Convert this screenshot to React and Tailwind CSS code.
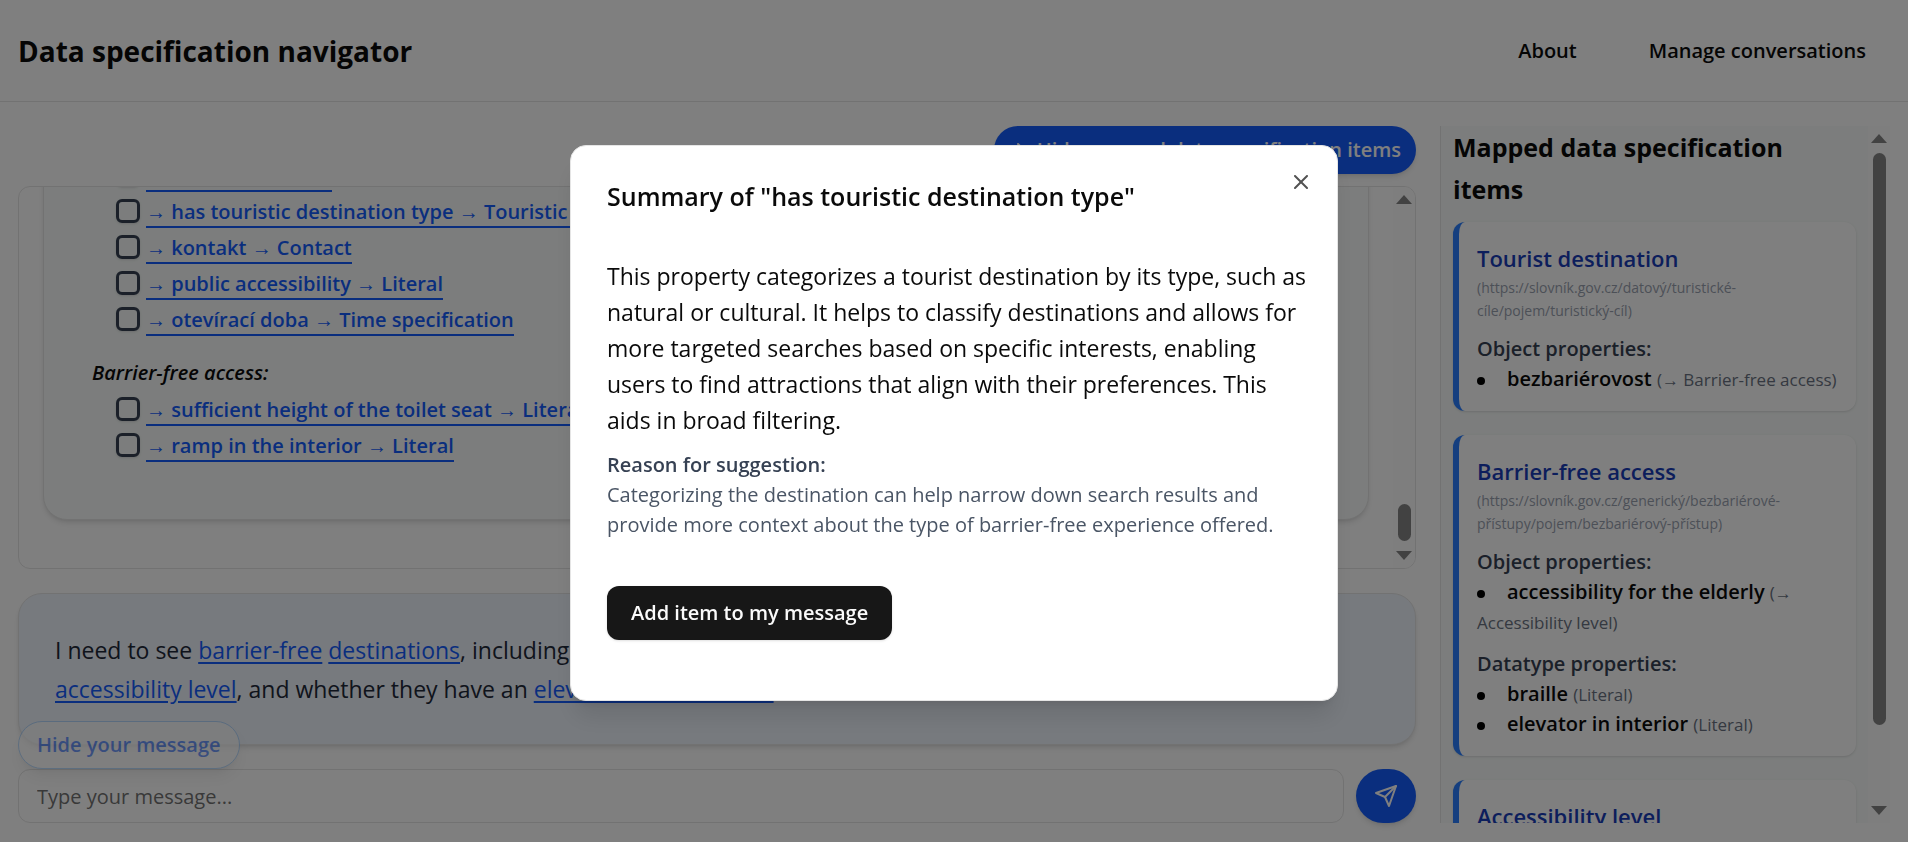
import React from "react";
import { ChevronRight, X } from "lucide-react";

const suggestions = [
  {
    title: "Tourist destination:",
    items: [
      "→ identifier → Text",
      "→ has touristic destination type → Touristic destination type",
      "→ kontakt → Contact",
      "→ public accessibility → Literal",
      "→ otevírací doba → Time specification",
    ],
  },
  {
    title: "Barrier-free access:",
    items: [
      "→ sufficient height of the toilet seat → Literal",
      "→ ramp in the interior → Literal",
    ],
  },
];

const mappedItems = [
  {
    name: "Tourist destination",
    iri: "(https://slovník.gov.cz/datový/turistické-cíle/pojem/turistický-cíl)",
    groups: [
      {
        label: "Object properties:",
        properties: [["bezbariérovost", "(→ Barrier-free access)"]],
      },
    ],
  },
  {
    name: "Barrier-free access",
    iri: "(https://slovník.gov.cz/generický/bezbariérové-přístupy/pojem/bezbariérový-přístup)",
    groups: [
      {
        label: "Object properties:",
        properties: [["accessibility for the elderly", "(→ Accessibility level)"]],
      },
      {
        label: "Datatype properties:",
        properties: [
          ["braille", "(Literal)"],
          ["elevator in interior", "(Literal)"],
        ],
      },
    ],
  },
  { name: "Accessibility level", iri: "", groups: [] },
];

function Arrow({ down }) {
  return (
    <svg viewBox="0 0 16 9" className="h-[9px] w-4 shrink-0 fill-[#858585]" aria-hidden="true">
      <path d={down ? "M0 0H16L8 9Z" : "M0 9H16L8 0Z"} />
    </svg>
  );
}

function ScrollTrack({ children }) {
  return (
    <div className="flex w-[22px] shrink-0 flex-col items-center bg-[#fdfdfd] py-2" aria-hidden="true">
      <Arrow />
      <div className="flex w-full flex-1 flex-col items-center py-[10px]">{children}</div>
      <Arrow down />
    </div>
  );
}

function Header() {
  return (
    <header className="flex h-[102px] shrink-0 items-center justify-between border-b border-neutral-200 px-[18px]">
      <h1 className="text-[28px] font-bold">Data specification navigator</h1>
      <nav className="flex gap-6 text-[20px] font-semibold">
        <a href="#about" className="px-6">About</a>
        <a href="#conversations" className="px-6">Manage conversations</a>
      </nav>
    </header>
  );
}

function Suggestions() {
  return (
    <section className="flex min-h-0 flex-1 overflow-hidden rounded-xl border border-neutral-200">
      <div className="flex min-w-0 flex-1 flex-col justify-end overflow-hidden px-6 pb-12">
        <div className="shrink-0 rounded-3xl border border-neutral-200 bg-[#f8fbfa] px-12 pt-12 pb-[54px] text-[20px] shadow-md">
          {suggestions.map((group, g) => (
            <div key={group.title}>
              <h3 className={g === 0 ? "mb-1 leading-8 font-semibold italic" : "mt-[18px] mb-1 leading-8 font-semibold italic"}>
                {group.title}
              </h3>
              <ul className="pl-6">
                {group.items.map((item) => (
                  <li key={item} className="flex h-9 items-center gap-[6px]">
                    <input
                      type="checkbox"
                      aria-label={item}
                      className="mb-1 size-6 shrink-0 appearance-none rounded-md border-3 border-gray-700 shadow-sm"
                    />
                    <a href="#item" className="border-b-2 border-blue-600 leading-7 font-semibold whitespace-nowrap text-blue-600">
                      {item}
                    </a>
                  </li>
                ))}
              </ul>
            </div>
          ))}
        </div>
      </div>
      <ScrollTrack>
        <div className="mt-auto h-[37px] w-[13px] rounded-full bg-[#858585]" />
      </ScrollTrack>
    </section>
  );
}

function Term({ children }) {
  return (
    <a href="#term" className="text-blue-600 underline decoration-2 underline-offset-3">
      {children}
    </a>
  );
}

function Message() {
  return (
    <section className="mt-6 shrink-0 rounded-3xl border border-neutral-200 bg-[#eef4fc] px-9 pt-[37px] pb-[35px] text-[23px] leading-[39px] text-gray-800 shadow-md">
      I need to see <Term>barrier-free</Term> <Term>destinations</Term>, including <Term>accessibility for the elderly</Term>,
      the presence of <Term>braille</Term>, their overall <Term>accessibility&nbsp;level</Term>, and whether they have an{" "}
      <Term>elevator in the interior</Term>.
    </section>
  );
}

function Composer() {
  return (
    <div className="relative mt-6 flex shrink-0 gap-3">
      <button
        type="button"
        className="absolute bottom-full left-0 h-12 rounded-full border border-blue-300 bg-white px-[18px] text-[20px] font-semibold text-blue-600 opacity-60 shadow-lg"
      >
        Hide your message
      </button>
      <input
        type="text"
        aria-label="Message"
        placeholder="Type your message..."
        className="h-[54px] min-w-0 flex-1 rounded-xl border border-neutral-200 px-[18px] text-[20px] placeholder:text-neutral-500"
      />
      <button
        type="button"
        aria-label="Send"
        className="flex h-[54px] w-[60px] items-center justify-center rounded-full bg-blue-600 text-white shadow-md"
      >
        <svg
          viewBox="0 0 24 24"
          className="size-6"
          fill="none"
          stroke="currentColor"
          strokeWidth="2"
          strokeLinecap="round"
          strokeLinejoin="round"
        >
          <path d="m22 2-7 20-4-9-9-4Z" />
          <path d="M22 2 11 13" />
        </svg>
      </button>
    </div>
  );
}

function Sidebar() {
  return (
    <aside className="flex w-[450px] shrink-0 overflow-hidden border-l border-neutral-200 bg-[#f8fbfa]">
      <div className="min-w-0 flex-1 px-3">
        <h2 className="mb-3 text-[25px] leading-[42px] font-bold">Mapped data specification items</h2>
        <div className="flex flex-col gap-6">
          {mappedItems.map((item) => (
            <article key={item.name} className="rounded-xl border-l-6 border-blue-500 bg-white px-[18px] pt-[18px] pb-[17px] shadow-sm">
              <h3 className="text-[22px] leading-9 font-semibold text-blue-800">{item.name}</h3>
              <p className="text-[14px] leading-[23px] text-gray-400">{item.iri}</p>
              {item.groups.map((group) => (
                <div key={group.label} className="mt-3 text-[20px] leading-[30px]">
                  <h4 className="font-semibold text-gray-700">{group.label}</h4>
                  <ul>
                    {group.properties.map(([name, target]) => (
                      <li key={name}>
                        <span className="mr-[22px] inline-block size-2 rounded-full bg-black align-middle" />
                        <span className="font-semibold">{name}</span>{" "}
                        <span className="text-[17px] leading-none text-gray-500">{target}</span>
                      </li>
                    ))}
                  </ul>
                </div>
              ))}
            </article>
          ))}
        </div>
      </div>
      <ScrollTrack>
        <div className="h-[89%] w-[13px] rounded-full bg-[#858585]" />
      </ScrollTrack>
    </aside>
  );
}

function SummaryDialog() {
  return (
    <div className="fixed inset-0 flex items-center justify-center bg-black/50 pt-1">
      <div
        role="dialog"
        aria-modal="true"
        aria-labelledby="summary-title"
        className="relative w-full max-w-3xl rounded-2xl border border-neutral-200 bg-white pt-9 pr-7 pb-[60px] pl-9 shadow-xl"
      >
        <button type="button" aria-label="Close" className="absolute top-6 right-6 opacity-70">
          <X className="size-6" />
        </button>
        <h2 id="summary-title" className="text-[25px] leading-7 font-semibold">
          Summary of "has touristic destination type"
        </h2>
        <p className="mt-12 text-[23px] leading-9">
          This property categorizes a tourist destination by its type, such as natural or cultural. It helps to classify
          destinations and allows for more targeted searches based on specific interests, enabling users to find attractions
          that align with their preferences. This aids in broad filtering.
        </p>
        <div className="mt-3 text-[20px] leading-[30px]">
          <h3 className="font-semibold text-gray-700">Reason for suggestion:</h3>
          <p className="text-gray-600">
            Categorizing the destination can help narrow down search results and provide more context about the type of
            barrier-free experience offered.
          </p>
        </div>
        <button type="button" className="mt-[46px] block h-[54px] rounded-xl bg-neutral-900 px-6 text-[20px] font-semibold text-neutral-50 shadow-sm">
          Add item to my message
        </button>
      </div>
    </div>
  );
}

export default function App() {
  return (
    <div className="flex h-screen flex-col overflow-hidden bg-white font-['Open_Sans',sans-serif] text-neutral-950">
      <Header />
      <main className="flex min-h-0 flex-1 gap-6 px-[18px] pt-6 pb-[19px]">
        <div className="flex min-w-0 flex-1 flex-col">
          <button
            type="button"
            className="mb-3 flex h-12 shrink-0 items-center gap-1 self-end rounded-full bg-blue-600 px-[15px] text-[20px] font-semibold text-white shadow-md"
          >
            <ChevronRight className="size-6" />
            Hide mapped data specification items
          </button>
          <Suggestions />
          <Message />
          <Composer />
        </div>
        <Sidebar />
      </main>
      <SummaryDialog />
    </div>
  );
}
